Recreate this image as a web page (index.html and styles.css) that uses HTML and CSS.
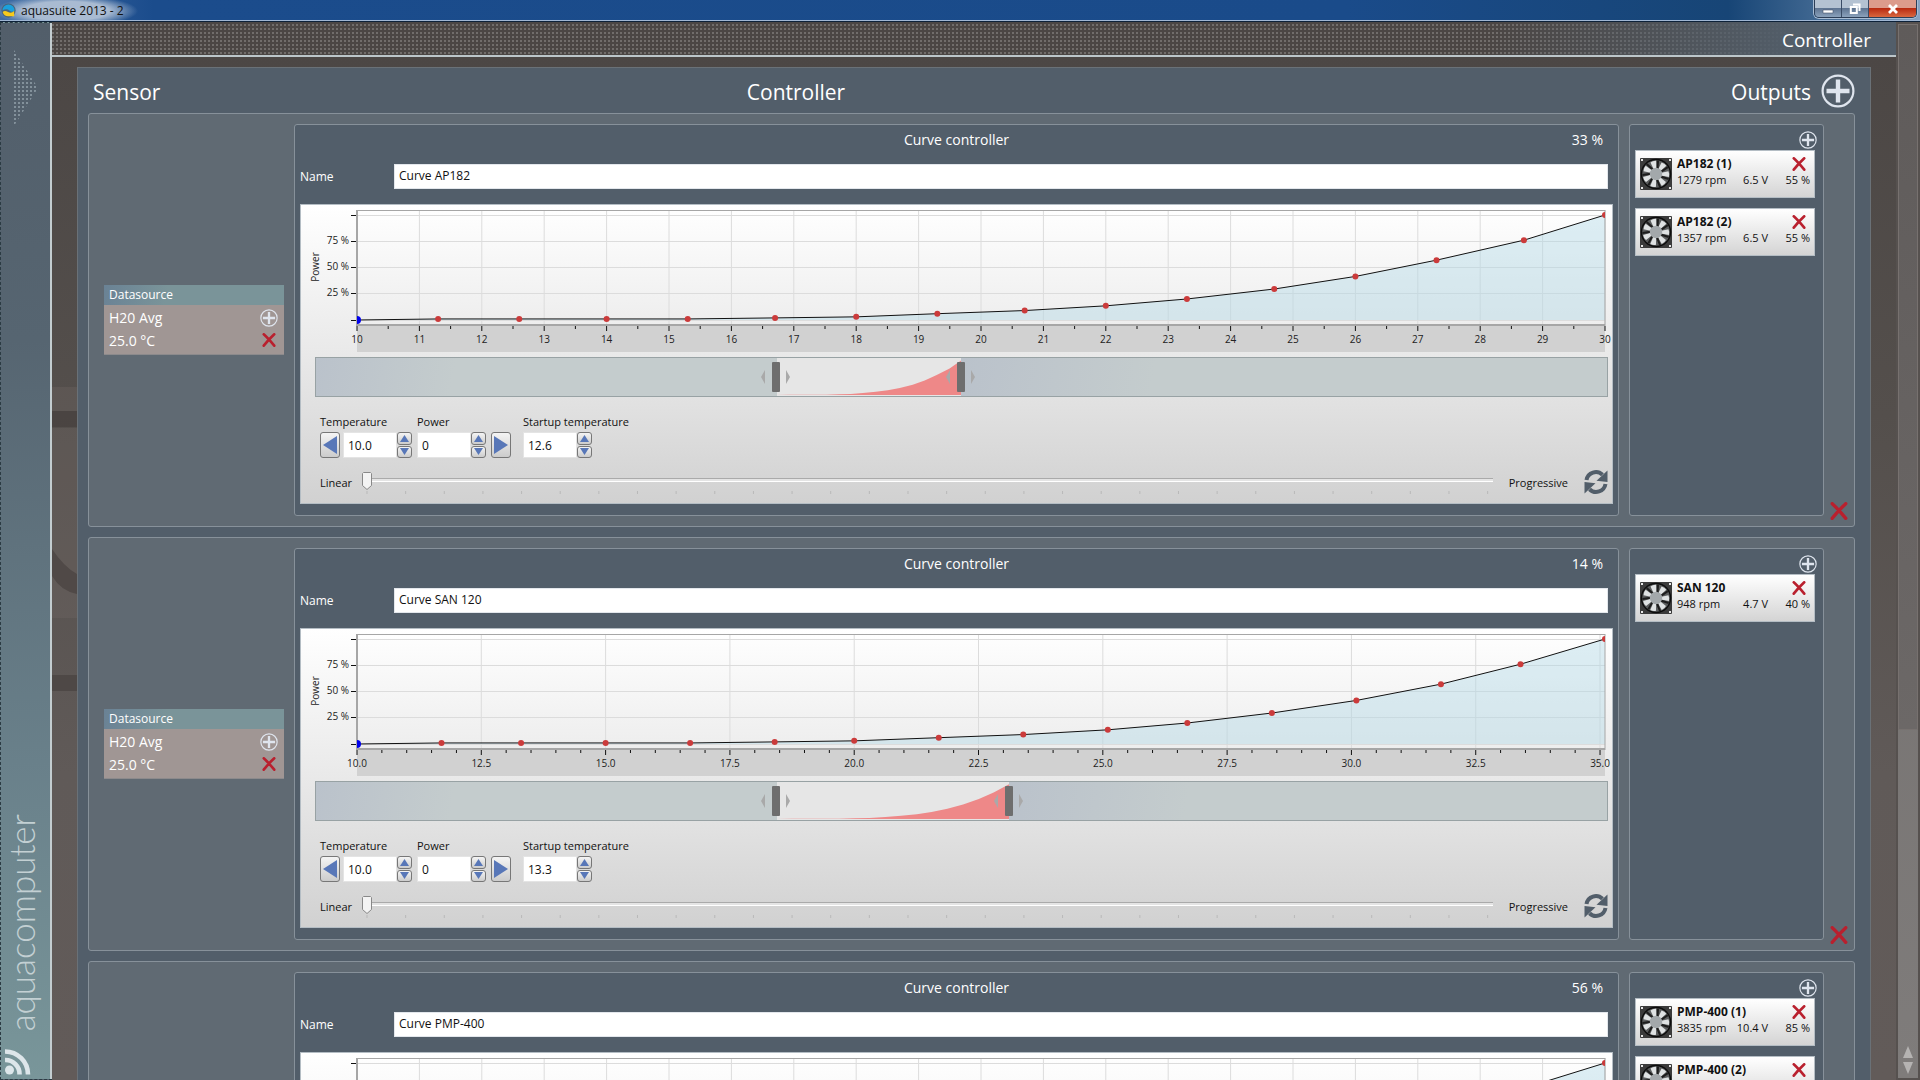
FILE: index.html
```html
<!DOCTYPE html>
<html lang="en">
<head>
    <meta charset="UTF-8">
    <meta name="viewport" content="width=device-width, initial-scale=1.0">
    <title>aquasuite 2013 - 2</title>
    <link rel="stylesheet" href="styles.css">
</head>
<body>

    <!-- shared icons -->
    <svg class="sprite" aria-hidden="true">
        <symbol id="icon-plus" viewBox="0 0 34 34">
            <circle cx="17" cy="17" r="15.4" fill="none" stroke="currentColor" stroke-width="2.2"/>
            <path d="M17 5.500v23M5.500 17h23" stroke="currentColor" stroke-width="4.400"/>
        </symbol>
        <symbol id="icon-delete" viewBox="0 0 16 16">
            <path d="M2 1.500 Q7 6 14 14.500 M14 1.500 Q8 7 2 14.500" fill="none" stroke="#b9202e" stroke-width="3" stroke-linecap="round"/>
        </symbol>
        <symbol id="icon-refresh" viewBox="0 0 24 24">
            <path d="M2.500 10A9.500 9.500 0 0 1 18.500 4.800" fill="none" stroke="currentColor" stroke-width="4"/>
            <path d="M23.500 .5v11.500l-11-1.200z" fill="currentColor"/>
            <path d="M21.500 14A9.500 9.500 0 0 1 5.500 19.200" fill="none" stroke="currentColor" stroke-width="4"/>
            <path d="M.5 23.500V12l11 1.200z" fill="currentColor"/>
        </symbol>
        <symbol id="icon-fan" viewBox="0 0 32 32">
            <rect width="32" height="32" rx="1" fill="#3b3b3b"/>
            <circle cx="16" cy="16" r="15.2" fill="#0c0c0c"/>
            <circle cx="16" cy="16" r="13.8" fill="#5b5d5e"/>
            <g fill="#dfe2e3">
                <path id="blade" d="M13.500 11 L10.500 4.500 Q13 2.500 16 2.800 L16.500 11z"/>
                <use href="#blade" transform="rotate(51.400 16 16)"/>
                <use href="#blade" transform="rotate(102.800 16 16)"/>
                <use href="#blade" transform="rotate(154.200 16 16)"/>
                <use href="#blade" transform="rotate(205.600 16 16)"/>
                <use href="#blade" transform="rotate(257 16 16)"/>
                <use href="#blade" transform="rotate(308.400 16 16)"/>
            </g>
            <g stroke="#1d1d1d" stroke-width="2">
                <path id="gap" d="M17.500 11 L18 2.500"/>
                <use href="#gap" transform="rotate(51.400 16 16)"/>
                <use href="#gap" transform="rotate(102.800 16 16)"/>
                <use href="#gap" transform="rotate(154.200 16 16)"/>
                <use href="#gap" transform="rotate(205.600 16 16)"/>
                <use href="#gap" transform="rotate(257 16 16)"/>
                <use href="#gap" transform="rotate(308.400 16 16)"/>
            </g>
            <circle cx="16" cy="16" r="6.200" fill="#a3a8ab"/>
            <path d="M1 1h2v2H1zM29 1h2v2h-2zM1 29h2v2H1zM29 29h2v2h-2z" fill="#e8e8e8"/>
        </symbol>
    </svg>

    <header class="titlebar">
        <svg class="app-icon" viewBox="0 0 16 16" aria-hidden="true">
            <circle cx="8" cy="8" r="7.600" fill="#49657a"/>
            <path d="M1.500 8A6.500 6.500 0 0 1 14.500 8Q12 10.500 9 8T1.500 8z" fill="#1ba0dc"/>
            <path d="M1.800 9.500Q4 7.500 7.500 9.500T14 8.500V14H9A6.500 6.500 0 0 1 1.800 9.500z" fill="#f7cb1c"/>
        </svg>
        <span class="app-title">aquasuite 2013 - 2</span>
        <div class="window-buttons">
            <button aria-label="Minimize"><svg width="12" height="12"><path d="M1 7h10v3H1z" fill="#fff" stroke="#46566c" stroke-width=".6"/></svg></button>
            <button aria-label="Restore"><svg width="12" height="12"><path d="M4 1.500h6.500V8M1.800 4h6v6h-6z" fill="none" stroke="#fff" stroke-width="2"/></svg></button>
            <button class="close" aria-label="Close"><svg width="12" height="12"><path d="M2 2l8 8M10 2l-8 8" stroke="#fff" stroke-width="2.800"/></svg></button>
        </div>
    </header>

    <div class="app">
        <!-- collapsed side menu -->
        <nav class="sidebar">
            <button class="expand" aria-label="Expand menu">
                <svg width="24" height="76">
                    <defs>
                        <pattern id="dots" width="4" height="4" patternUnits="userSpaceOnUse">
                            <rect width="2" height="2" fill="#83919b"/>
                        </pattern>
                    </defs>
                    <path d="M0 0L24 38L0 76z" fill="url(#dots)"/>
                </svg>
            </button>
            <div class="brand">aquacomputer</div>
            <a class="feed" href="#feed" aria-label="News feed">
                <svg width="26" height="26" viewBox="0 0 26 26">
                    <circle cx="4.500" cy="21" r="4.500" fill="#dde6ea"/>
                    <path d="M0 11A14 14 0 0 1 14.500 25.500M0 2.500A23 23 0 0 1 23 25.500" fill="none" stroke="#dde6ea" stroke-width="4.600"/>
                </svg>
            </a>
        </nav>

        <div class="page">
            <div class="page-title"><h1>Controller</h1></div>

            <main class="content">
                <svg class="backdrop" width="25" height="700" aria-hidden="true">
                    <path d="M0 330h25v24H0zM0 371h25v190H0z" fill="#716764" opacity=".35"/>
                    <path d="M0 354h25v16H0zM0 618h25v16H0z" fill="#453e3c" opacity=".6"/>
                    <path d="M0 492Q12 510 25 517V537Q9 534 0 519z" fill="#453e3c" opacity=".6"/>
                </svg>
                <section class="board">
                    <div class="board-head">
                        <h2>Sensor</h2>
                        <h2>Controller</h2>
                        <div class="outputs-head">
                            <h2>Outputs</h2>
                            <button class="icon-button" aria-label="Add controller">
                                <svg width="34" height="34"><use href="#icon-plus"/></svg>
                            </button>
                        </div>
                    </div>
                    <div class="rows" id="rows"></div>
                </section>
            </main>
        </div>

        <div class="scrollbar">
            <div class="scroll-thumb"></div>
            <button class="scroll-up" aria-label="Scroll up"></button>
            <button class="scroll-down" aria-label="Scroll down"></button>
        </div>
    </div>

    <script src="script.js"></script>
</body>
</html>
```
FILE: styles.css
```css
* {
    box-sizing: border-box;
}

body {
    margin: 0;
    height: 100vh;
    display: flex;
    flex-direction: column;
    overflow: hidden;
    font-family: "Open Sans", "Noto Sans", sans-serif;
    font-size: 12px;
    color: #fff;
    background: #56514f;
}

h1, h2, h3 {
    margin: 0;
    font-weight: 400;
}

button {
    padding: 0;
    border: none;
    background: none;
    color: inherit;
    font: inherit;
}

svg {
    display: block;
}

.sprite {
    position: absolute;
    width: 0;
    height: 0;
}

/* window title bar */
.titlebar {
    height: 22px;
    flex: none;
    display: flex;
    align-items: center;
    gap: 5px;
    padding-left: 1px;
    border-bottom: 1px solid #0d2138;
    box-shadow: inset 0 -1px #9fb6d3;
    background:
        radial-gradient(ellipse 72px 16px at 66px 11px, #a9bbd2 60%, transparent),
        linear-gradient(to right, #3f6ca4, #1b4c8c 8%, #1a4b8a 70%, #174576 90%, #55799f 97%, #87a3c2);
}

.app-icon {
    width: 15px;
    height: 15px;
}

.app-title {
    flex: 1;
    line-height: 20px;
    color: #111;
}

.window-buttons {
    display: flex;
    align-self: flex-start;
    height: 18px;
    margin-right: 3px;
    border: 1px solid #2c3e57;
    border-top: none;
    border-radius: 0 0 5px 5px;
    box-shadow: 0 0 0 1px #a9bdd4;
    overflow: hidden;
}

.window-buttons button {
    width: 27px;
    display: flex;
    align-items: center;
    justify-content: center;
    border-right: 1px solid #3a4c66;
    background: linear-gradient(#b4c2d2 45%, #5f7592 50%, #8ba2bc);
}

.window-buttons .close {
    width: 47px;
    border-right: none;
    background: linear-gradient(#dc9b8c 45%, #b92b12 50%, #d9673f);
}

.app {
    flex: 1;
    min-height: 0;
    display: flex;
}

/* side menu */
.sidebar {
    width: 52px;
    flex: none;
    display: flex;
    flex-direction: column;
    border: 1px dashed #2b3b43;
    border-right: none;
    box-shadow: inset -2px 0 #c3cdd0;
    background: linear-gradient(#525e6a, #566571 30%, #69808a 70%, #79969a);
}

.expand {
    margin: 27px 0 0 13px;
    align-self: flex-start;
}

.brand {
    margin-top: auto;
    align-self: flex-start;
    writing-mode: vertical-rl;
    transform: rotate(180deg);
    font-family: Lato, sans-serif;
    font-weight: 300;
    font-size: 35px;
    line-height: 40px;
    color: #c3d0d3;
}

.feed {
    margin: 18px 0 4px 4px;
}

/* page */
.page {
    flex: 1;
    min-width: 0;
    display: flex;
    flex-direction: column;
}

.page-title {
    height: 35px;
    flex: none;
    display: flex;
    align-items: flex-end;
    justify-content: flex-end;
    padding-right: 25px;
    border-bottom: 2px solid #bcc6ca;
    background:
        linear-gradient(to right, transparent 78%, #525e6a 95%),
        conic-gradient(from 90deg at 2px 2px, #4b4644 75%, #716d6b 0) 2px 2px / 4px 4px;
}

.page-title h1 {
    font-size: 19px;
    line-height: 30px;
}

.content {
    flex: 1;
    min-height: 0;
    position: relative;
    padding: 10px 25px;
    overflow-y: auto;
    scrollbar-width: none;
    background: linear-gradient(#4c4745, #544f4c 35%, #605a58 70%, #625b59);
}

.backdrop {
    position: absolute;
    left: 0;
    top: 0;
}

.board {
    padding: 0 15px 10px 10px;
    border: 1px solid #6a7177;
    background: #525e6a;
}

.board-head {
    display: grid;
    grid-template-columns: 37% auto 1fr;
    align-items: center;
    height: 45px;
}

.board-head h2 {
    padding: 2px 0 0 5px;
    font-size: 21px;
    line-height: 30px;
}

.outputs-head {
    display: flex;
    align-items: center;
    justify-content: flex-end;
    gap: 10px;
}

.icon-button {
    color: #dfe5ee;
}

.rows {
    display: flex;
    flex-direction: column;
    gap: 10px;
}

/* one controller with its sensor and outputs */
.row {
    display: flex;
    height: 414px;
    padding: 10px 0 10px 15px;
    border: 1px solid #87919a;
    border-radius: 3px;
    background: #606a73;
}

.sensor {
    width: 180px;
    flex: none;
    align-self: center;
    margin-right: 10px;
    padding-bottom: 4px;
    border-bottom: 1px solid #8c8a8c;
    background: #a09694;
}

.sensor h3 {
    padding-left: 5px;
    font-size: 12px;
    line-height: 20px;
    background: linear-gradient(100deg, #6a8295, #7a9499 35%);
}

.sensor div {
    display: flex;
    align-items: center;
    justify-content: space-between;
    height: 20px;
    padding: 0 6px 0 5px;
    font-size: 14px;
}

.sensor div + div .icon-button {
    margin-right: 2px;
}

.sensor div:first-of-type {
    height: 25px;
}

.curve {
    flex: 1;
    min-width: 0;
    padding: 4px 5px 10px;
    border: 1px solid #87919a;
    border-radius: 3px;
    background: #525e6a;
}

.curve-head {
    display: grid;
    grid-template-columns: 1fr auto 1fr;
    line-height: 22px;
    font-size: 14px;
}

.curve-head h3 {
    grid-column: 2;
    font-size: 14px;
}

.curve-head span {
    padding-right: 10px;
    text-align: right;
}

.name {
    display: flex;
    align-items: center;
    margin: 13px 5px 15px 0;
}

.name label {
    width: 94px;
}

.name input {
    flex: 1;
    height: 25px;
    padding: 0 4px 3px;
    border: 1px solid #e3e7ec;
    font: inherit;
    color: #111;
    background: #fff;
}

.editor {
    height: 300px;
    padding: 5px 4px 0 14px;
    border: 1px solid #b4bdc4;
    background: linear-gradient(#fff, #e9e9e9 50%, #d1d1d1);
    color: #111;
}

/* chart */
.chart {
    height: 142px;
    margin: 0 3px 0 42px;
}

.chart svg {
    overflow: visible;
}

.chart .points {
    overflow: hidden;
}

.chart text {
    font-size: 10px;
    fill: #222;
}

.chart .grid {
    stroke: #dcdcdc;
}

.chart .tick {
    stroke: #111;
}

.chart .frame {
    fill: none;
    stroke: #a6a6a6;
}

.chart .axis {
    stroke: #a6a6a6;
    stroke-width: 2;
}

.chart .scale {
    fill: #d1d1d1;
}

.chart .area {
    fill: #add8e6;
    fill-opacity: .4;
}

.chart .line {
    fill: none;
    stroke: #111;
    vector-effect: non-scaling-stroke;
}

.chart .point {
    fill: #cb3b3b;
}

.chart .start {
    fill: #00e;
}

/* working range below the chart */
.range {
    display: flex;
    height: 40px;
    margin-top: 5px;
    border: 1px solid #98a2a4;
}

.range .shade {
    background: linear-gradient(100deg, #bac2cb, #c4cccd 30%);
}

.range .shade:last-child {
    flex: 1;
}

.range .window {
    position: relative;
    padding-top: 2px;
    background: #e6e6e6;
}

.range .preview {
    width: 100%;
    height: 35px;
    fill: #ee8888;
}

.handle {
    position: absolute;
    top: 4px;
    width: 29px;
    height: 30px;
}

.handle.from {
    left: -16px;
}

.handle.to {
    right: -14px;
}

/* number fields */
.fields {
    display: flex;
    align-items: flex-end;
    margin: 14px 0 0 5px;
}

.field {
    display: flex;
    flex-direction: column;
    white-space: nowrap;
}

.field label {
    font-size: 11px;
    line-height: 21px;
}

.field .box {
    display: flex;
    height: 26px;
}

.field input {
    width: 54px;
    padding: 0 4px;
    border: 1px solid #e4e4e4;
    font: inherit;
    color: #111;
    background: #fff;
}

.spin {
    display: flex;
    flex-direction: column;
    gap: 1px;
}

.spin button, .step {
    display: flex;
    align-items: center;
    justify-content: center;
    border: 1px solid #777;
    border-radius: 3px;
    background: linear-gradient(#f4f4f4, #ccc);
}

.spin button {
    flex: 1;
    width: 15px;
}

.step {
    width: 20px;
    height: 26px;
}

.step.prev {
    margin-right: 3px;
}

.step.next {
    margin: 0 12px 0 5px;
}

.fields svg {
    fill: #5877b8;
}

.field.power {
    margin-left: 5px;
}

/* linear / progressive slider */
.shape {
    display: flex;
    align-items: center;
    margin: 10px 0 0 5px;
    font-size: 11px;
}

.slider {
    flex: 1;
    height: 24px;
    margin: 4px 16px 0 10px;
}

.slider input {
    appearance: none;
    display: block;
    width: 100%;
    height: 18px;
    margin: 0;
    background: linear-gradient(#aaa 1px, #e4e4e4 1px 3px, #fff 3px) 0 6px / 100% 4px no-repeat;
}

.slider input::-webkit-slider-thumb {
    appearance: none;
    width: 10px;
    height: 18px;
    background: url("data:image/svg+xml,%3Csvg xmlns='http://www.w3.org/2000/svg' width='10' height='18'%3E%3Cpath d='M1.500.5h7l1 1V13.500l-4.500 4-4.500-4V1.500z' fill='%23f3f3f3' stroke='%23888'/%3E%3C/svg%3E");
}

.slider svg {
    width: calc(100% - 10px);
    height: 5px;
    margin-left: 5px;
    stroke: #b9b9b9;
    overflow: visible;
}

.shape .icon-button {
    margin-left: 16px;
    color: #525e6a;
}

/* outputs */
.outputs {
    width: 195px;
    flex: none;
    display: flex;
    flex-direction: column;
    margin-left: 10px;
    padding: 6px 8px 0 5px;
    border: 1px solid #87919a;
    border-radius: 3px;
    background: #525e6a;
}

.outputs > .icon-button {
    align-self: flex-end;
    margin: 0 -2px 1px 0;
}

.output {
    display: grid;
    grid-template-columns: 32px 1fr;
    column-gap: 5px;
    align-items: center;
    height: 48px;
    margin-bottom: 10px;
    padding: 0 4px;
    border: 1px solid #b4bdc4;
    background: linear-gradient(#fff, #d4d4d4);
    color: #111;
}

.output-info {
    padding-bottom: 4px;
}

.output-top {
    display: flex;
    align-items: center;
    justify-content: space-between;
    padding-right: 4px;
    font-weight: 700;
    line-height: 16px;
}

.output-values {
    display: grid;
    grid-template-columns: 1fr auto 42px;
    font-size: 11px;
    line-height: 16px;
    white-space: nowrap;
}

.output-values span:last-child {
    text-align: right;
}

.remove {
    align-self: flex-end;
    margin: 0 6px -4px;
}

/* scroll bar */
.scrollbar {
    width: 20px;
    flex: none;
    display: flex;
    flex-direction: column;
    align-items: center;
    margin: 2px;
    background: linear-gradient(#6f6b69, #7f7c7b);
}

.scroll-thumb {
    width: 100%;
    height: 67%;
    margin-bottom: auto;
    border: 1px solid #77716f;
    background: linear-gradient(#5f5b5a, #6c6867);
}

.scroll-up, .scroll-down {
    width: 10px;
    height: 12px;
    margin-bottom: 4px;
    background: #b5b3b2;
}

.scroll-up {
    clip-path: polygon(50% 0, 100% 100%, 0 100%);
}

.scroll-down {
    clip-path: polygon(0 0, 100% 0, 50% 100%);
}
```
FILE: script.js
```js
const power = [0, 1, 1, 1, 1, 2, 3, 6, 9, 13.5, 20, 29.5, 41.5, 57, 76, 100];

const temps20 = [10, 11.3, 12.6, 14, 15.3, 16.7, 18, 19.3, 20.7, 22, 23.3, 24.7, 26, 27.3, 28.7, 30];
const temps25 = [10, 11.7, 13.3, 15, 16.7, 18.4, 20, 21.7, 23.4, 25.1, 26.7, 28.4, 30.1, 31.8, 33.4, 35.1];

const controllers = [
    {
        name: 'Curve AP182', value: 33, startup: '12.6', temps: temps20,
        major: 1, minor: 0.5, digits: 0, from: 35.7, width: 14.3,
        outputs: [['AP182 (1)', 1279, '6.5', 55], ['AP182 (2)', 1357, '6.5', 55]]
    },
    {
        name: 'Curve SAN 120', value: 14, startup: '13.3', temps: temps25,
        major: 2.5, minor: 0.5, digits: 1, from: 35.7, width: 18,
        outputs: [['SAN 120', 948, '4.7', 40]]
    },
    {
        name: 'Curve PMP-400', value: 56, startup: '12.6', temps: temps20,
        major: 1, minor: 0.5, digits: 0, from: 35.7, width: 14.3,
        outputs: [['PMP-400 (1)', 3835, '10.4', 85], ['PMP-400 (2)', 3835, '10.4', 85]]
    }
];

const TOP = 5;      // y of 100 %
const BASE = 110;   // y of 0 %

function icon(name, size) {
    return `<svg width="${size}" height="${size}"><use href="#icon-${name}"/></svg>`;
}

function chart(c) {
    const min = c.temps[0];
    const max = c.temps[c.temps.length - 1];
    const px = t => (t - min) / (max - min) * 100;
    const py = p => BASE - (BASE - TOP) * p / 100;
    let grid = '', ticks = '', labels = '';

    [0, 25, 50, 75, 100].forEach(p => {
        const y = Math.floor(py(p)) + 0.5;
        grid += `<line class="grid" x1="0" x2="100%" y1="${y}" y2="${y}"/>`;
        ticks += `<line class="tick" x1="-6" x2="-1" y1="${y}" y2="${y}"/>`;
        if (p > 0 && p < 100) {
            labels += `<text x="-8" y="${y + 2}" text-anchor="end">${p} %</text>`;
        }
    });

    const steps = Math.floor((max - min) / c.minor + 0.001);
    const every = Math.round(c.major / c.minor);
    for (let i = 0; i <= steps; i++) {
        const t = min + i * c.minor;
        const x = px(t) + '%';
        const big = i % every === 0;
        ticks += `<line class="tick" x1="${x}" x2="${x}" y1="116" y2="${big ? 121 : 119}"/>`;
        if (big) {
            grid += `<line class="grid" x1="${x}" x2="${x}" y1="0" y2="115"/>`;
            labels += `<text x="${x}" y="133" text-anchor="middle">${t.toFixed(c.digits)}</text>`;
        }
    }

    const line = c.temps.map((t, i) => `${px(t)},${100 - power[i]}`).join(' ');
    const points = c.temps.map((t, i) =>
        `<circle class="${i ? 'point' : 'start'}" cx="${px(t)}%" cy="${py(power[i])}" r="${i ? 3 : 4}"/>`).join('');

    return `<svg width="100%" height="142">
        <rect class="scale" y="115" width="100%" height="27"/>
        ${grid}
        <svg y="${TOP}" width="100%" height="${BASE - TOP}" viewBox="0 0 100 100" preserveAspectRatio="none">
            <polygon class="area" points="0,100 ${line} 100,100"/>
            <polyline class="line" points="${line}"/>
        </svg>
        <rect class="frame" y="0.5" width="100%" height="115"/>
        <path class="axis" d="M0 0V116"/>
        <line class="axis" x1="0" x2="100%" y1="115" y2="115"/>
        <svg class="points" width="100%" height="115">${points}</svg>
        ${ticks}${labels}
        <text transform="translate(-38 57) rotate(-90)" text-anchor="middle">Power</text>
    </svg>`;
}

function handle(side) {
    return `<svg class="handle ${side}"><path d="M4 8v14l-4-7zM25 8v14l4-7z" fill="#a9a9a9"/>
        <rect x="11" width="8" height="30" rx="1" fill="#6e6e6e"/></svg>`;
}

function spinField(id, label, value, cls, before = '') {
    return `<div class="field ${cls}">
        <label for="${id}">${label}</label>
        <div class="box">
            ${before}
            <input type="text" id="${id}" value="${value}">
            <div class="spin">
                <button aria-label="Increase ${label}"><svg width="9" height="7"><path d="M4.500 0L9 7H0z"/></svg></button>
                <button aria-label="Decrease ${label}"><svg width="9" height="7"><path d="M0 0h9L4.500 7z"/></svg></button>
            </div>
        </div>
    </div>`;
}

function sliderTicks() {
    let s = '';
    for (let i = 0; i <= 29; i++) {
        const x = i / 29 * 100 + '%';
        s += `<line x1="${x}" x2="${x}" y1="1" y2="4"/>`;
    }
    return `<svg>${s}</svg>`;
}

function output(o) {
    return `<div class="output">
        ${icon('fan', 32)}
        <div class="output-info">
            <div class="output-top">${o[0]}<button aria-label="Remove ${o[0]}">${icon('delete', 14)}</button></div>
            <div class="output-values"><span>${o[1]} rpm</span><span>${o[2]} V</span><span>${o[3]} %</span></div>
        </div>
    </div>`;
}

function row(c, n) {
    const min = c.temps[0];
    const max = c.temps[c.temps.length - 1];
    const mini = c.temps.map((t, i) => `${(t - min) / (max - min) * 100},${100 - power[i]}`).join(' ');
    const prev = '<button class="step prev" aria-label="Previous point"><svg width="14" height="18"><path d="M14 0v18L0 9z"/></svg></button>';

    return `<article class="row">
        <div class="sensor">
            <h3>Datasource</h3>
            <div>H20 Avg<button class="icon-button" aria-label="Select datasource">${icon('plus', 18)}</button></div>
            <div>25.0 °C<button class="icon-button" aria-label="Remove datasource">${icon('delete', 14)}</button></div>
        </div>
        <div class="curve">
            <div class="curve-head"><h3>Curve controller</h3><span>${c.value} %</span></div>
            <div class="name"><label for="name${n}">Name</label><input type="text" id="name${n}" value="${c.name}"></div>
            <div class="editor">
                <div class="chart">${chart(c)}</div>
                <div class="range">
                    <div class="shade" style="width: ${c.from}%"></div>
                    <div class="window" style="width: ${c.width}%">
                        <svg class="preview" viewBox="0 0 100 100" preserveAspectRatio="none"><polygon points="0,100 ${mini} 100,100"/></svg>
                        ${handle('from')}${handle('to')}
                    </div>
                    <div class="shade"></div>
                </div>
                <div class="fields">
                    ${spinField('temp' + n, 'Temperature', '10.0', 'temperature', prev)}
                    ${spinField('power' + n, 'Power', '0', 'power')}
                    <button class="step next" aria-label="Next point"><svg width="14" height="18"><path d="M0 0v18l14-9z"/></svg></button>
                    ${spinField('startup' + n, 'Startup temperature', c.startup, 'startup')}
                </div>
                <div class="shape">
                    <label for="shape${n}">Linear</label>
                    <div class="slider"><input type="range" id="shape${n}" min="0" max="29" value="0">${sliderTicks()}</div>
                    <span>Progressive</span>
                    <button class="icon-button" aria-label="Reset curve">${icon('refresh', 24)}</button>
                </div>
            </div>
        </div>
        <div class="outputs">
            <button class="icon-button" aria-label="Add output">${icon('plus', 18)}</button>
            ${c.outputs.map(output).join('')}
        </div>
        <button class="remove" aria-label="Remove controller">${icon('delete', 18)}</button>
    </article>`;
}

document.getElementById('rows').innerHTML = controllers.map(row).join('');
```
